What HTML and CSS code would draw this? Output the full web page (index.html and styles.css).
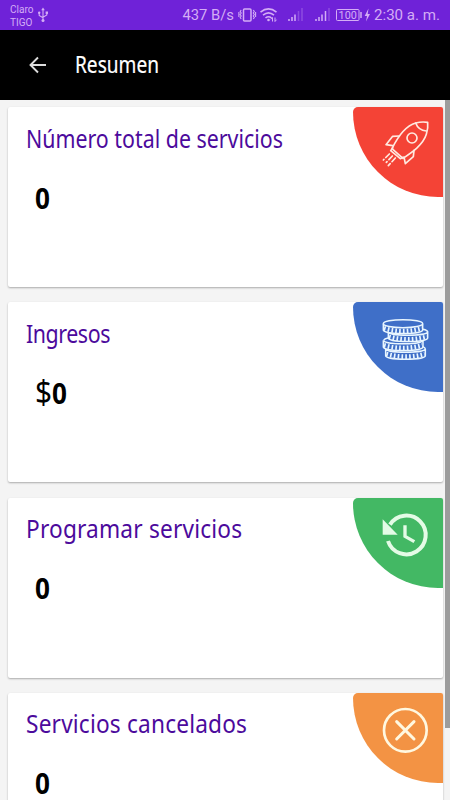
FILE: index.html
```html
<!DOCTYPE html>
<html lang="es">
<head>
    <meta charset="UTF-8">
    <meta name="viewport" content="width=device-width, initial-scale=1.0">
    <title>Resumen</title>
    <link rel="stylesheet" href="styles.css">
</head>
<body>
    <div class="status-bar">
        <div class="carriers">
            <span>Claro</span>
            <span>TIGO</span>
        </div>
        <svg class="usb-icon" width="12" height="16" viewBox="0 0 12 16" fill="none" stroke="currentColor" stroke-width="1.1">
            <path d="M6 2v11M2.2 5.500v3l3.800 2.200M9.800 5.500v2.500l-3.800 2.200"/>
            <path d="M6 .5l1.800 2.700H4.200z" fill="currentColor" stroke="none"/>
            <circle cx="6" cy="13.500" r="1.500" fill="currentColor" stroke="none"/>
            <circle cx="2.200" cy="5.700" r="1.200" fill="currentColor" stroke="none"/>
            <path d="M8.600 4.500h2.400v2.400H8.600z" fill="currentColor" stroke="none"/>
        </svg>
        <span class="speed">437 B/s</span>
        <svg class="status-icons" width="132" height="16" viewBox="0 0 132 16" fill="none" stroke="currentColor">
            <!-- vibrate -->
            <rect x="5.500" y="2" width="7.500" height="12" rx="1" stroke-width="1.500"/>
            <path d="M3.200 3l-1 1.500 1 1.500-1 1.500 1 1.500-1 1.500 1 1.500M15.300 3l1 1.500-1 1.500 1 1.500-1 1.500 1 1.500-1 1.500M.9 5v5M17.600 5v5" stroke-width="1.100"/>
            <!-- wifi -->
            <path d="M22.500 5.200q8-6.500 16 0M25 8.200q5.500-4.600 11 0M27.500 11q3-2.500 6 0" stroke-width="1.600"/>
            <circle cx="30.500" cy="13" r="1.300" fill="currentColor" stroke="none"/>
            <path d="M34.500 14.500v-4l-1.500 1.800M37 10.500v4l1.500-1.800" stroke-width="1"/>
            <!-- signal -->
            <path d="M51 14v-2M54 14v-4M57 14V7.500" stroke-width="1.500"/>
            <path d="M60.500 14V4M64 14V1" stroke-width="1.500" opacity=".3"/>
            <path d="M78 14v-2M81 14v-4M84 14V7.500M87.500 14V4" stroke-width="1.500"/>
            <path d="M91 14V1" stroke-width="1.500" opacity=".3"/>
            <!-- battery -->
            <rect x="98.500" y="2.500" width="22.500" height="11" rx="1" stroke-width="1"/>
            <path d="M123 5v6" stroke-width="1.500"/>
            <text class="battery-level" x="109.700" y="12">100</text>
            <path d="M130.500 1.500L126.700 9h2.300l-1 5.500 4-7.500h-2.300z" fill="currentColor" stroke="none"/>
        </svg>
        <span class="clock">2:30 a. m.</span>
    </div>

    <div class="toolbar">
        <svg class="back-icon" width="18" height="18" viewBox="0 0 18 18" fill="none" stroke="currentColor" stroke-width="1.900">
            <path d="M17 9H2M9 1.500L1.500 9 9 16.500"/>
        </svg>
        <h1>Resumen</h1>
    </div>

    <div class="content">
        <div class="cards">
            <div class="card">
                <h2>Número total de servicios</h2>
                <p class="value"><b>0</b></p>
                <div class="badge red">
                    <svg viewBox="38 38 270 270" fill="none" stroke="currentColor" stroke-width="5" stroke-linejoin="round" stroke-linecap="round">
                        <path d="M155 163C170 132 192 96 226 86q18-5 36-2 2 18-4 36c-10 32-43 54-70 72z"/>
                        <path d="M226 86q8 22 32 24"/>
                        <circle cx="215" cy="131" r="15"/>
                        <path d="M177 125l-20 1-20 25 20 3M221 168l-2 19-24 21-4-20"/>
                        <path d="M157 161l-6 8 29 24 8-4"/>
                        <path d="M147 179l-18 18M156 185l-18 19M165 191l-21 23" stroke-dasharray="15 8 30"/>
                    </svg>
                </div>
            </div>

            <div class="card">
                <h2 class="tight">Ingresos</h2>
                <p class="value"><span class="currency">$</span><b>0</b></p>
                <div class="badge blue">
                    <svg viewBox="38 38 270 270" fill="none" stroke="currentColor" stroke-width="4.500">
                        <!-- coins, bottom one first -->
                        <g class="coin">
                            <path d="M136 178v21c0 14 119 14 119 0v-21c0 14-119 14-119 0z"/>
                            <path class="ridges" d="M138 194q58 16 115 0"/>
                        </g>
                        <g class="coin">
                            <path d="M129 153v20c0 14 119 14 119 0v-20c0 14-119 14-119 0z"/>
                            <path class="ridges" d="M131 168q58 16 115 0"/>
                        </g>
                        <g class="coin">
                            <path d="M144 127v19c0 14 118 14 118 0v-19c0 14-118 14-118 0z"/>
                            <path class="ridges" d="M146 142q58 16 114 0"/>
                        </g>
                        <g class="coin">
                            <path d="M129 103v19c0 14 118 14 118 0v-19"/>
                            <ellipse cx="188" cy="103" rx="59" ry="12"/>
                            <path class="ridges" d="M131 117q57 17 114 0"/>
                        </g>
                        <path d="M248 120c10 2 14 4 14 8M130 153c2-4 8-6 13-7M248 172c5 2 7 4 7 8"/>
                    </svg>
                </div>
            </div>

            <div class="card">
                <h2 class="wide">Programar servicios</h2>
                <p class="value"><b>0</b></p>
                <div class="badge green">
                    <svg viewBox="38 38 270 270" fill="none" stroke="currentColor" stroke-width="12">
                        <path d="M149 118A58 58 0 1 1 143 167"/>
                        <path d="M127 102v46h45z" fill="currentColor" stroke="none"/>
                        <path d="M194 120v33l28 16" stroke-width="10"/>
                    </svg>
                </div>
            </div>

            <div class="card">
                <h2 class="wide">Servicios cancelados</h2>
                <p class="value"><b>0</b></p>
                <div class="badge orange">
                    <svg viewBox="38 38 270 270" fill="none" stroke="currentColor" stroke-width="8" stroke-linecap="round">
                        <circle cx="195" cy="150" r="64"/>
                        <path d="M169 124l52 52M221 124l-52 52" stroke-width="9"/>
                    </svg>
                </div>
            </div>
        </div>
        <div class="scrollbar"></div>
    </div>
</body>
</html>
```
FILE: styles.css
```css
* {
    margin: 0;
    padding: 0;
    box-sizing: border-box;
}

body {
    font-family: 'Noto Sans', sans-serif;
    background: #f4f4f4;
    width: 450px;
    height: 800px;
    overflow: hidden;
    display: flex;
    flex-direction: column;
}

.status-bar {
    height: 30px;
    flex-shrink: 0;
    display: flex;
    align-items: center;
    padding: 0 10px;
    background: #6f22d8;
    color: #d4adf5;
    font-family: Roboto, sans-serif;
}

.carriers {
    display: flex;
    flex-direction: column;
    width: 24px;
    margin-right: 3px;
    padding-top: 1px;
    font-size: 10px;
    line-height: 13px;
}

.speed {
    margin-left: auto;
    font-size: 14.8px;
    white-space: nowrap;
}

.status-icons {
    margin-left: 4px;
}

.battery-level {
    font-size: 10.8px;
    text-anchor: middle;
    fill: currentColor;
    stroke: none;
}

.clock {
    margin-left: 4px;
    font-size: 15.1px;
    white-space: nowrap;
}

.toolbar {
    height: 70px;
    flex-shrink: 0;
    display: flex;
    align-items: center;
    padding-left: 29px;
    background: #000;
    color: #fff;
}

.back-icon {
    color: #ddd;
}

.toolbar h1 {
    margin-left: 28px;
    padding-bottom: 2px;
    font-size: 23px;
    font-weight: 400;
    -webkit-text-stroke: 0.2px;
    transform: scaleX(0.83);
    transform-origin: left;
}

.content {
    flex: 1;
    min-height: 0;
    overflow: hidden;
    display: flex;
    justify-content: space-between;
}

.cards {
    width: 442.6px;
    padding: 7.4px 0 0 8px;
    display: flex;
    flex-direction: column;
    gap: 15.1px;
}

.card {
    position: relative;
    height: 180px;
    flex-shrink: 0;
    padding: 13.5px 18px;
    background: #fff;
    border-radius: 2px;
    box-shadow: 0 1px 2px rgba(0, 0, 0, 0.3);
}

.card h2 {
    color: #4c0a9c;
    font-size: 24.5px;
    line-height: 36px;
    font-weight: 400;
    white-space: nowrap;
    transform: scaleX(0.872);
    transform-origin: left;
}

.card h2.tight {
    letter-spacing: -0.5px;
}

.card h2.wide {
    letter-spacing: 0.2px;
    transform: scaleX(0.925);
}

.value {
    margin: 23px 0 0 9px;
    font-size: 29px;
    line-height: 36px;
    transform: scaleX(0.9);
    transform-origin: left;
}

.currency {
    font-size: 33px;
    line-height: 1;
}

.badge {
    position: absolute;
    top: 0;
    right: 0;
    width: 90px;
    height: 90px;
    border-radius: 5px 2px 0 85px;
}

.badge svg {
    display: block;
    width: 90px;
    height: 90px;
}

.red {
    background: #f44336;
    color: #ffe9e0;
}

.blue {
    background: #3f6fc8;
    color: #e9f6ff;
}

.green {
    background: #43b864;
    color: #e4fbe6;
}

.orange {
    background: #f39344;
    color: #fff8e0;
}

.coin {
    fill: #3f6fc8;
}

.coin .ridges {
    fill: none;
    stroke-width: 14;
    stroke-dasharray: 5 6.5;
}

.scrollbar {
    width: 5px;
    height: 628px;
    background: #9c9c9c;
}
```
